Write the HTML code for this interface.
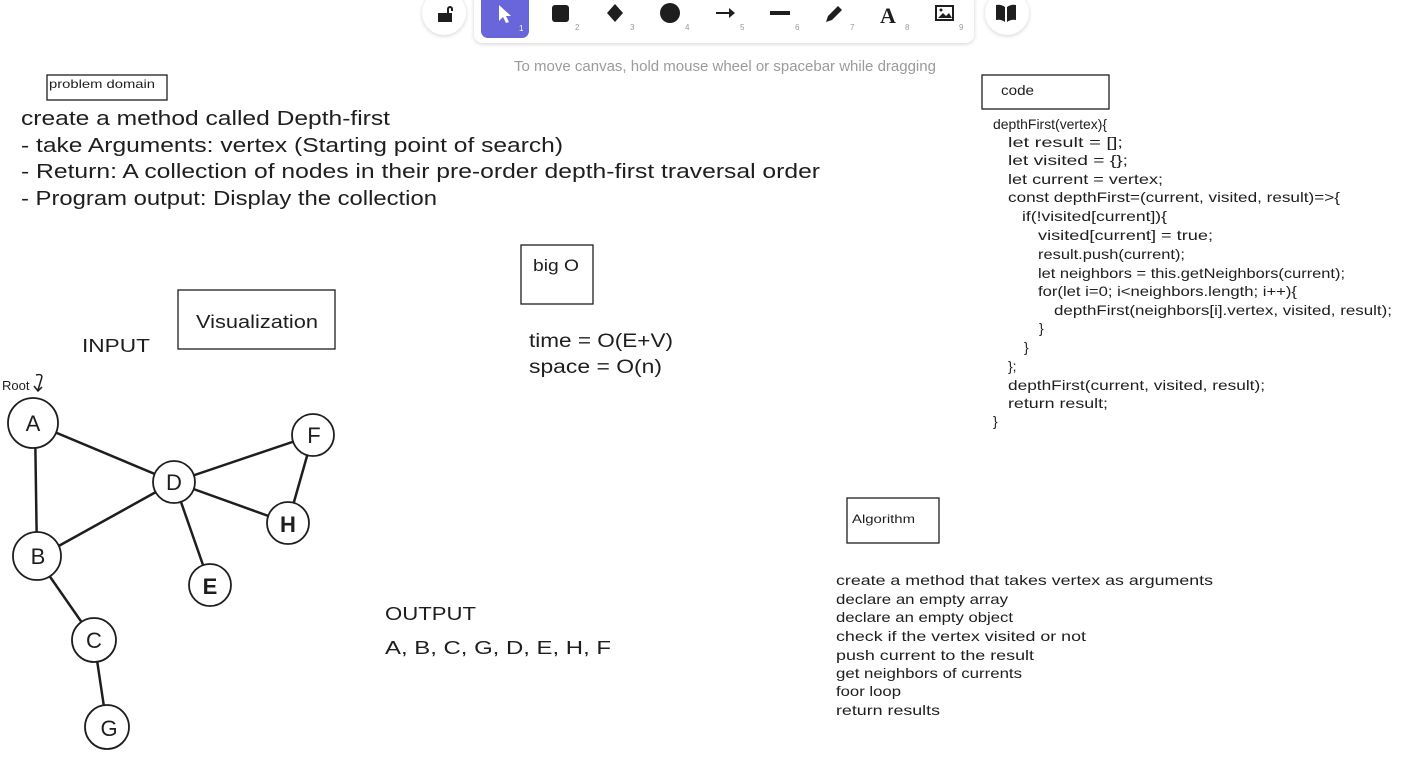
<!DOCTYPE html>
<html><head><meta charset="utf-8"><style>
body{margin:0;width:1415px;height:767px;background:#fff;overflow:hidden;position:relative;font-family:"Liberation Sans",sans-serif}
.tb{position:absolute;left:474px;top:-10px;width:500px;height:53px;background:#fff;border-radius:8px;box-shadow:0 1px 4px rgba(0,0,0,.18)}
.cb{position:absolute;top:-9px;width:44px;height:44px;border-radius:50%;background:#fff;box-shadow:0 1px 4px rgba(0,0,0,.18)}
.hint{position:absolute;left:0;width:1450px;top:58px;text-align:center;color:#9a9a9f;font-size:15px}
svg text{font-family:"Liberation Sans",sans-serif;fill:#1e1e1e}
</style></head><body>
<div class="cb" style="left:422px"></div>
<div class="cb" style="left:985px"></div>
<div class="tb"></div>
<div class="hint">To move canvas, hold mouse wheel or spacebar while dragging</div>
<svg width="1415" height="767" style="position:absolute;left:0;top:0">
<rect x="481" y="-6" width="48" height="44" rx="7" fill="#6965db"/>
<path d="M499 5 L499 21 L503 17 L506 23 L509 22 L506 16 L511 16 Z" fill="#fff"/>
<text x="519" y="31" font-size="8" style="fill:#fff">1</text>
<g fill="#1e1e1e">
<path d="M438 13 h14 v9 h-14z M447 13 v-4 a3 3 0 0 1 6 0 v2 h-2 v-2 a1 1 0 0 0 -2 0 v4z"/>
<rect x="552" y="5" width="17" height="17" rx="3"/>
<path d="M615 4 L623 13 L615 22 L607 13Z"/>
<circle cx="670" cy="13" r="10"/>
<path d="M716 12 h13 v-4 l6 5 l-6 5 v-4 h-13z"/>
<rect x="770" y="11" width="20" height="4"/>
<path d="M826 22 l2 -6 l10 -10 l4 4 l-10 10z"/>
<text x="880" y="23" font-size="22" font-weight="bold" font-family="Liberation Serif" style="font-family:'Liberation Serif'">A</text>
<path d="M935 5 h19 v16 h-19z M937 7 v12 h15 v-12z"/><path d="M938 18 l5 -5 l3 3 l3 -3 l3 5z"/><circle cx="941" cy="10" r="1.5"/>
<path d="M996 5 q5 -1 9 2 v15 q-4 -3 -9 -2z M1016 5 q-5 -1 -9 2 v15 q4 -3 9 -2z"/>
</g>
<g font-size="8" style="fill:#999"><text x="575" y="30" style="fill:#999">2</text><text x="630" y="30" style="fill:#999">3</text><text x="685" y="30" style="fill:#999">4</text><text x="740" y="30" style="fill:#999">5</text><text x="795" y="30" style="fill:#999">6</text><text x="850" y="30" style="fill:#999">7</text><text x="905" y="30" style="fill:#999">8</text><text x="959" y="30" style="fill:#999">9</text></g>

<g fill="none" stroke="#1e1e1e" stroke-width="1.3">
<rect x="47" y="75" width="120" height="25"/>
<rect x="521" y="245" width="72" height="59"/>
<rect x="178" y="290" width="157" height="59"/>
<rect x="847" y="498" width="92" height="45"/>
<rect x="982" y="75" width="127" height="34"/>
</g>
<g lengthAdjust="spacingAndGlyphs">
<text x="49" y="88" font-size="12" textLength="106" lengthAdjust="spacingAndGlyphs">problem domain</text>
<text x="21" y="125" font-size="20" textLength="369" lengthAdjust="spacingAndGlyphs">create a method called Depth-first</text>
<text x="21" y="152" font-size="20" textLength="542" lengthAdjust="spacingAndGlyphs">- take Arguments: vertex (Starting point of search)</text>
<text x="21" y="178" font-size="20" textLength="799" lengthAdjust="spacingAndGlyphs">- Return: A collection of nodes in their pre-order depth-first traversal order</text>
<text x="21" y="205" font-size="20" textLength="416" lengthAdjust="spacingAndGlyphs">- Program output: Display the collection</text>
<text x="533" y="271" font-size="17" textLength="46" lengthAdjust="spacingAndGlyphs">big O</text>
<text x="196" y="328" font-size="18" textLength="122" lengthAdjust="spacingAndGlyphs">Visualization</text>
<text x="82" y="352" font-size="18" textLength="68" lengthAdjust="spacingAndGlyphs">INPUT</text>
<text x="529" y="347" font-size="19" textLength="144" lengthAdjust="spacingAndGlyphs">time = O(E+V)</text>
<text x="529" y="373" font-size="19" textLength="133" lengthAdjust="spacingAndGlyphs">space = O(n)</text>
<text x="385" y="620" font-size="18" textLength="91" lengthAdjust="spacingAndGlyphs">OUTPUT</text>
<text x="385" y="654" font-size="18" textLength="226" lengthAdjust="spacingAndGlyphs">A, B, C, G, D, E, H, F</text>
<text x="852" y="523" font-size="12" textLength="63" lengthAdjust="spacingAndGlyphs">Algorithm</text>
<text x="1001" y="95" font-size="14" textLength="33" lengthAdjust="spacingAndGlyphs">code</text>
</g>
<g font-size="14">
<text x="836" y="585" textLength="377" lengthAdjust="spacingAndGlyphs">create a method that takes vertex as arguments</text>
<text x="836" y="604" textLength="172" lengthAdjust="spacingAndGlyphs">declare an empty array</text>
<text x="836" y="622" textLength="177" lengthAdjust="spacingAndGlyphs">declare an empty object</text>
<text x="836" y="641" textLength="250" lengthAdjust="spacingAndGlyphs">check if the vertex visited or not</text>
<text x="836" y="660" textLength="198" lengthAdjust="spacingAndGlyphs">push current to the result</text>
<text x="836" y="678" textLength="186" lengthAdjust="spacingAndGlyphs">get neighbors of currents</text>
<text x="836" y="696" textLength="65" lengthAdjust="spacingAndGlyphs">foor loop</text>
<text x="836" y="715" textLength="104" lengthAdjust="spacingAndGlyphs">return results</text>
</g>
<g font-size="14">
<text x="993" y="129" textLength="114" lengthAdjust="spacingAndGlyphs">depthFirst(vertex){</text>
<text x="1008" y="147" textLength="115" lengthAdjust="spacingAndGlyphs">let result = [];</text>
<text x="1008" y="165" textLength="120" lengthAdjust="spacingAndGlyphs">let visited = {};</text>
<text x="1008" y="184" textLength="155" lengthAdjust="spacingAndGlyphs">let current = vertex;</text>
<text x="1008" y="202" textLength="332" lengthAdjust="spacingAndGlyphs">const depthFirst=(current, visited, result)=&gt;{</text>
<text x="1022" y="221" textLength="145" lengthAdjust="spacingAndGlyphs">if(!visited[current]){</text>
<text x="1038" y="240" textLength="175" lengthAdjust="spacingAndGlyphs">visited[current] = true;</text>
<text x="1038" y="259" textLength="147" lengthAdjust="spacingAndGlyphs">result.push(current);</text>
<text x="1038" y="278" textLength="307" lengthAdjust="spacingAndGlyphs">let neighbors = this.getNeighbors(current);</text>
<text x="1038" y="296" textLength="259" lengthAdjust="spacingAndGlyphs">for(let i=0; i&lt;neighbors.length; i++){</text>
<text x="1054" y="315" textLength="338" lengthAdjust="spacingAndGlyphs">depthFirst(neighbors[i].vertex, visited, result);</text>
<text x="1039" y="333">}</text>
<text x="1024" y="352">}</text>
<text x="1008" y="371">};</text>
<text x="1008" y="390" textLength="257" lengthAdjust="spacingAndGlyphs">depthFirst(current, visited, result);</text>
<text x="1008" y="408" textLength="100" lengthAdjust="spacingAndGlyphs">return result;</text>
<text x="993" y="426">}</text>
</g>

<g stroke="#1e1e1e" stroke-width="2.5" fill="none">
<line x1="33" y1="423" x2="174" y2="482"/><line x1="35" y1="423" x2="37" y2="558"/>
<line x1="174" y1="482" x2="37" y2="558"/><line x1="174" y1="482" x2="313" y2="435"/>
<line x1="174" y1="482" x2="288" y2="523"/><line x1="174" y1="482" x2="210" y2="585"/>
<line x1="313" y1="435" x2="288" y2="523"/><line x1="37" y1="558" x2="94" y2="640"/>
<line x1="94" y1="640" x2="107" y2="727"/>
</g>
<g stroke="#1e1e1e" stroke-width="1.8" fill="#fff">
<circle cx="33" cy="423" r="25"/><circle cx="174" cy="482" r="21"/><circle cx="313" cy="435" r="21"/>
<circle cx="288" cy="523" r="21"/><circle cx="210" cy="585" r="21"/><circle cx="37" cy="556" r="24"/>
<circle cx="94" cy="640" r="22"/><circle cx="107" cy="727" r="22"/>
</g>
<g font-size="22" text-anchor="middle">
<text x="33" y="431">A</text><text x="174" y="490">D</text><text x="314" y="443">F</text>
<text x="288" y="532" font-weight="bold">H</text><text x="210" y="594" font-weight="bold">E</text>
<text x="38" y="564">B</text><text x="94" y="648">C</text><text x="109" y="736">G</text>
</g>
<text x="2" y="390" font-size="13">Root</text>
<path d="M36 375 q8 -2 5 5 l-3 10 M34 386 l4 5 l4 -4" stroke="#1e1e1e" stroke-width="1.5" fill="none"/>
</svg>
</body></html>
